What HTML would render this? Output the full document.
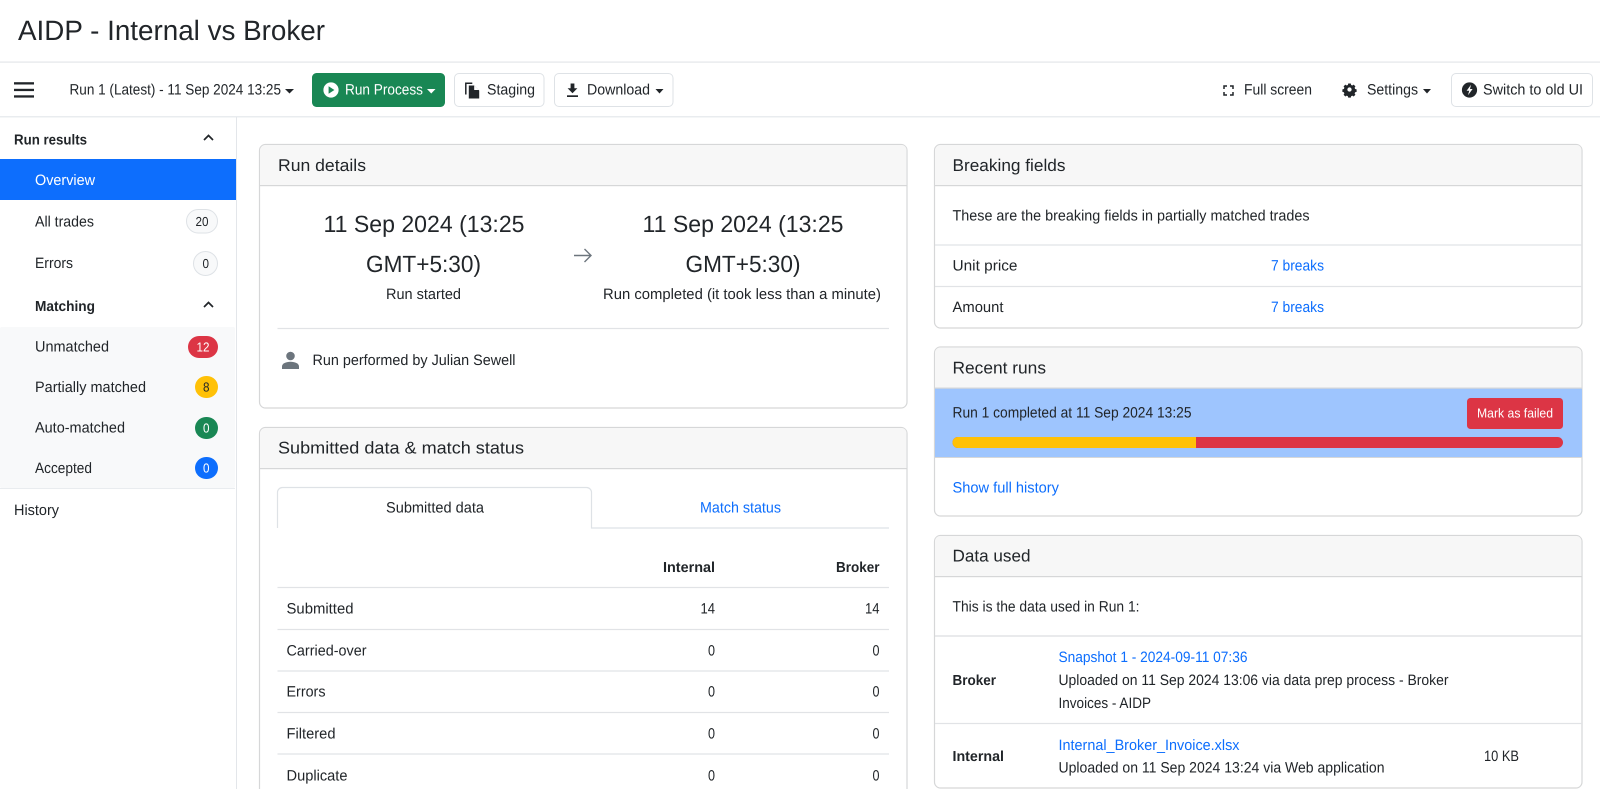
<!DOCTYPE html>
<html lang="en"><head><meta charset="utf-8"><title>AIDP - Internal vs Broker</title>
<style>
html,body{margin:0;padding:0;background:#fff;width:1600px;height:789px;overflow:hidden}
svg{display:block}
text{font-family:"Liberation Sans",sans-serif;font-size:15px;fill:#212529;text-rendering:geometricPrecision;white-space:pre}
.b{font-weight:700;font-size:14.5px}.l{fill:#0d6efd}.w{fill:#fff}.h{font-size:17px}.d{font-size:23.5px}.s{font-size:13px}
.card{fill:#fff;stroke:#d6d7d8;stroke-width:1.2}.hd{fill:#f7f7f7}
.ln{stroke:#e1e3e6;stroke-width:1.2}
</style></head><body>
<svg width="1600" height="789" viewBox="0 0 1600 789" xmlns="http://www.w3.org/2000/svg">
<rect width="1600" height="789" fill="#fff"/>
<text x="18" y="40" style="font-size:28px" textLength="307" lengthAdjust="spacingAndGlyphs">AIDP - Internal vs Broker</text>
<rect y="61.5" width="1600" height="1.2" fill="#e3e6ea"/>
<rect y="116" width="1600" height="1.5" fill="#e9ecef"/>
<rect x="236" y="117" width="1" height="672" fill="#e3e6ea"/>

<!-- toolbar -->
<g fill="#212529"><rect x="14" y="82.2" width="20" height="2.3"/><rect x="14" y="88.8" width="20" height="2.3"/><rect x="14" y="95.3" width="20" height="2.3"/></g>
<text x="69.5" y="94.5" textLength="211.5" lengthAdjust="spacingAndGlyphs">Run 1 (Latest) - 11 Sep 2024 13:25</text>
<path d="M285 89h9l-4.5 4.5z" fill="#212529"/>
<rect x="312" y="73" width="133" height="34" rx="4.5" fill="#198754"/>
<circle cx="331" cy="90" r="7.6" fill="#fff"/><path d="M328.6 86.3v7.4l5.8-3.7z" fill="#198754"/>
<text class="w" x="345" y="94.5" textLength="78" lengthAdjust="spacingAndGlyphs">Run Process</text>
<path d="M427 89h8.5l-4.25 4.5z" fill="#fff"/>
<rect x="454.5" y="73.5" width="89.5" height="33" rx="4.5" fill="#fff" stroke="#dee2e6"/>
<path d="M465.8 94.5V83.2h6.5" fill="none" stroke="#212529" stroke-width="1.5"/>
<path d="M468.8 85.5h5.4l5 5v8h-10.4z" fill="#212529"/><path d="M474.2 85.5v4.5h4.6z" fill="#fff"/>
<text x="487" y="94.5" textLength="48" lengthAdjust="spacingAndGlyphs">Staging</text>
<rect x="554.5" y="73.5" width="118.5" height="33" rx="4.5" fill="#fff" stroke="#dee2e6"/>
<path d="M570.6 83.5h3.8v4.8h3l-4.9 5-4.9-5h3z" fill="#212529"/><rect x="567" y="95.3" width="11" height="1.7" fill="#212529"/>
<text x="587" y="94.5" textLength="63" lengthAdjust="spacingAndGlyphs">Download</text>
<path d="M655.5 89h8l-4 4.5z" fill="#212529"/>
<path d="M1224 89v-3h3M1230 86h3v3M1233 92v3h-3M1227 95h-3v-3" fill="none" stroke="#212529" stroke-width="1.5"/>
<text x="1244" y="94.5" textLength="68" lengthAdjust="spacingAndGlyphs">Full screen</text>
<g transform="translate(1349.5 90.5) scale(.74) translate(-1349.5 -92)"><path fill-rule="evenodd" fill="#212529" d="M1347.8 82.500h3.400l.5 2 1.600.7 1.800-1.100 2.400 2.400-1.100 1.800.7 1.600 2 .5v3.400l-2 .5-.7 1.600 1.100 1.800-2.400 2.400-1.800-1.100-1.600.7-.5 2h-3.400l-.5-2-1.600-.7-1.800 1.100-2.400-2.400 1.100-1.800-.7-1.600-2-.5v-3.400l2-.5.7-1.600-1.100-1.800 2.400-2.400 1.800 1.100 1.600-.7zM1349.500 87.800a2.900 2.900 0 1 0 0 5.800 2.900 2.900 0 0 0 0-5.800z"/></g>
<text x="1367" y="94.5" textLength="51" lengthAdjust="spacingAndGlyphs">Settings</text>
<path d="M1423 89h8l-4 4.500z" fill="#212529"/>
<rect x="1451.500" y="73.500" width="141" height="33" rx="4.500" fill="#fff" stroke="#dee2e6"/>
<circle cx="1469.500" cy="90" r="7.600" fill="#212529"/><path d="M1471 84.800l-4.400 6h2.600l-1.200 4.400 4.600-6.200h-2.600z" fill="#fff"/>
<text x="1483" y="94.500" textLength="100" lengthAdjust="spacingAndGlyphs">Switch to old UI</text>

<!-- sidebar -->
<text class="b" x="14" y="144.500" textLength="73" lengthAdjust="spacingAndGlyphs">Run results</text>
<path d="M204 140l4.500-4.500 4.500 4.500" fill="none" stroke="#212529" stroke-width="1.700"/>
<rect y="159" width="236" height="41" fill="#0d6efd"/>
<text class="w" x="35" y="185" textLength="60" lengthAdjust="spacingAndGlyphs">Overview</text>
<text x="35" y="226.500" textLength="59" lengthAdjust="spacingAndGlyphs">All trades</text>
<rect x="186.500" y="209.500" width="31" height="23.500" rx="11.700" fill="#f8f9fa" stroke="#dee2e6"/>
<text class="s" x="195.500" y="226" textLength="13" lengthAdjust="spacingAndGlyphs">20</text>
<text x="35" y="268" textLength="38" lengthAdjust="spacingAndGlyphs">Errors</text>
<rect x="193.500" y="251.500" width="24" height="24" rx="12" fill="#f8f9fa" stroke="#dee2e6"/>
<text class="s" x="202.500" y="268" textLength="6.500" lengthAdjust="spacingAndGlyphs">0</text>
<text class="b" x="35" y="311" textLength="60" lengthAdjust="spacingAndGlyphs">Matching</text>
<path d="M204 307l4.500-4.500 4.500 4.500" fill="none" stroke="#212529" stroke-width="1.700"/>
<rect y="327" width="235" height="161" rx="2" fill="#f8f9fa"/>
<rect y="488" width="235" height="1" fill="#e9ecef"/>
<text x="35" y="351.500" textLength="74" lengthAdjust="spacingAndGlyphs">Unmatched</text>
<rect x="188" y="336" width="30" height="22" rx="11" fill="#dc3545"/>
<text class="s w" x="196.500" y="351.500" textLength="13" lengthAdjust="spacingAndGlyphs">12</text>
<text x="35" y="392" textLength="111" lengthAdjust="spacingAndGlyphs">Partially matched</text>
<rect x="195" y="376" width="23" height="22" rx="11" fill="#ffc107"/>
<text class="s" x="203" y="391.500" textLength="6.500" lengthAdjust="spacingAndGlyphs">8</text>
<text x="35" y="432.500" textLength="90" lengthAdjust="spacingAndGlyphs">Auto-matched</text>
<rect x="195" y="417" width="23" height="22" rx="11" fill="#198754"/>
<text class="s w" x="203" y="432.500" textLength="6.500" lengthAdjust="spacingAndGlyphs">0</text>
<text x="35" y="473" textLength="57" lengthAdjust="spacingAndGlyphs">Accepted</text>
<rect x="195" y="457" width="23" height="22" rx="11" fill="#0d6efd"/>
<text class="s w" x="203" y="472.500" textLength="6.500" lengthAdjust="spacingAndGlyphs">0</text>
<text x="14" y="515" textLength="45" lengthAdjust="spacingAndGlyphs">History</text>

<!-- Run details -->
<rect class="card" x="259.500" y="144.500" width="647.500" height="263.500" rx="6"/>
<path class="hd" d="M260 185.500v-35a5.500 5.500 0 0 1 5.500-5.500h636a5 5 0 0 1 5 5.500v35z"/>
<rect x="259.500" y="185" width="648" height="1.200" fill="#d6d7d8"/>
<text class="h" x="278" y="171" textLength="88" lengthAdjust="spacingAndGlyphs">Run details</text>
<text class="d" x="323.500" y="232" textLength="201" lengthAdjust="spacingAndGlyphs">11 Sep 2024 (13:25</text>
<text class="d" x="366" y="272" textLength="115" lengthAdjust="spacingAndGlyphs">GMT+5:30)</text>
<text x="386" y="299" textLength="75" lengthAdjust="spacingAndGlyphs">Run started</text>
<path d="M574 255.500h17M584.500 249l6.500 6.500-6.500 6.500" fill="none" stroke="#6c757d" stroke-width="1.400"/>
<text class="d" x="642.500" y="232" textLength="201" lengthAdjust="spacingAndGlyphs">11 Sep 2024 (13:25</text>
<text class="d" x="685.500" y="272" textLength="115" lengthAdjust="spacingAndGlyphs">GMT+5:30)</text>
<text x="603" y="299" textLength="278" lengthAdjust="spacingAndGlyphs">Run completed (it took less than a minute)</text>
<line class="ln" x1="277.500" y1="328.500" x2="889" y2="328.500"/>
<circle cx="290.500" cy="356" r="4.300" fill="#6c757d"/><path d="M282 369v-2.500c0-3 4-4.700 8.500-4.700s8.500 1.700 8.500 4.700v2.500z" fill="#6c757d"/>
<text x="312.500" y="365" textLength="203" lengthAdjust="spacingAndGlyphs">Run performed by Julian Sewell</text>

<!-- Submitted data -->
<rect class="card" x="259.500" y="427.500" width="647.500" height="380" rx="6"/>
<path class="hd" d="M260 468v-34.500a5.500 5.500 0 0 1 5.500-5.500h636a5 5 0 0 1 5 5.500V468z"/>
<rect x="259.500" y="468" width="648" height="1.200" fill="#d6d7d8"/>
<text class="h" x="278" y="453.500" textLength="246" lengthAdjust="spacingAndGlyphs">Submitted data &amp; match status</text>
<path d="M277.500 528v-35.500a5 5 0 0 1 5-5h304a5 5 0 0 1 5 5v35.500H889" fill="none" stroke="#dee2e6" stroke-width="1.200"/>
<text x="386" y="512.500" textLength="98" lengthAdjust="spacingAndGlyphs">Submitted data</text>
<text class="l" x="700" y="512.500" textLength="81" lengthAdjust="spacingAndGlyphs">Match status</text>
<text class="b" x="663" y="572" textLength="52" lengthAdjust="spacingAndGlyphs">Internal</text>
<text class="b" x="836" y="572" textLength="43.500" lengthAdjust="spacingAndGlyphs">Broker</text>
<line class="ln" x1="277.500" y1="587.500" x2="889" y2="587.500"/>
<line class="ln" x1="277.500" y1="629.500" x2="889" y2="629.500"/>
<line class="ln" x1="277.500" y1="671" x2="889" y2="671"/>
<line class="ln" x1="277.500" y1="712.500" x2="889" y2="712.500"/>
<line class="ln" x1="277.500" y1="754" x2="889" y2="754"/>
<text x="286.500" y="613.500" textLength="67" lengthAdjust="spacingAndGlyphs">Submitted</text>
<text x="700.500" y="613.500" textLength="14.500" lengthAdjust="spacingAndGlyphs">14</text>
<text x="865" y="613.500" textLength="14.500" lengthAdjust="spacingAndGlyphs">14</text>
<text x="286.500" y="655.500" textLength="80" lengthAdjust="spacingAndGlyphs">Carried-over</text>
<text x="708" y="655.500" textLength="7" lengthAdjust="spacingAndGlyphs">0</text>
<text x="872.500" y="655.500" textLength="7" lengthAdjust="spacingAndGlyphs">0</text>
<text x="286.500" y="696.500" textLength="39" lengthAdjust="spacingAndGlyphs">Errors</text>
<text x="708" y="696.500" textLength="7" lengthAdjust="spacingAndGlyphs">0</text>
<text x="872.500" y="696.500" textLength="7" lengthAdjust="spacingAndGlyphs">0</text>
<text x="286.500" y="738.500" textLength="49" lengthAdjust="spacingAndGlyphs">Filtered</text>
<text x="708" y="738.500" textLength="7" lengthAdjust="spacingAndGlyphs">0</text>
<text x="872.500" y="738.500" textLength="7" lengthAdjust="spacingAndGlyphs">0</text>
<text x="286.500" y="780.500" textLength="61" lengthAdjust="spacingAndGlyphs">Duplicate</text>
<text x="708" y="780.500" textLength="7" lengthAdjust="spacingAndGlyphs">0</text>
<text x="872.500" y="780.500" textLength="7" lengthAdjust="spacingAndGlyphs">0</text>

<!-- Breaking fields -->
<rect class="card" x="934.500" y="144.500" width="647.500" height="183.500" rx="6"/>
<path class="hd" d="M935 185.500v-35a5.500 5.500 0 0 1 5.500-5.500h636a5 5 0 0 1 5 5.500v35z"/>
<rect x="934.500" y="185" width="648" height="1.200" fill="#d6d7d8"/>
<text class="h" x="952.500" y="171" textLength="113" lengthAdjust="spacingAndGlyphs">Breaking fields</text>
<text x="952.500" y="220.500" textLength="357" lengthAdjust="spacingAndGlyphs">These are the breaking fields in partially matched trades</text>
<line class="ln" x1="935" y1="245" x2="1582" y2="245"/>
<text x="952.500" y="270.500" textLength="65" lengthAdjust="spacingAndGlyphs">Unit price</text>
<text class="l" x="1271" y="270.500" textLength="53" lengthAdjust="spacingAndGlyphs">7 breaks</text>
<line class="ln" x1="935" y1="286.500" x2="1582" y2="286.500"/>
<text x="952.500" y="312" textLength="51" lengthAdjust="spacingAndGlyphs">Amount</text>
<text class="l" x="1271" y="312" textLength="53" lengthAdjust="spacingAndGlyphs">7 breaks</text>

<!-- Recent runs -->
<rect class="card" x="934.500" y="347" width="647.500" height="169" rx="6"/>
<path class="hd" d="M935 388v-35.500a5 5 0 0 1 5-5h636.500a5 5 0 0 1 5 5V388z"/>
<rect x="935" y="388" width="647" height="69" fill="#9ec5fe"/>
<rect x="934.500" y="387.500" width="648" height="1.200" fill="#d6d7d8"/>
<rect x="934.500" y="457" width="648" height="1" fill="#d6d7d8"/>
<text class="h" x="952.500" y="373.500" textLength="93.500" lengthAdjust="spacingAndGlyphs">Recent runs</text>
<text x="952.500" y="417.500" textLength="239" lengthAdjust="spacingAndGlyphs">Run 1 completed at 11 Sep 2024 13:25</text>
<rect x="1467" y="398" width="96" height="31" rx="3.500" fill="#dc3545"/>
<text class="s w" x="1477" y="417.500" textLength="76" lengthAdjust="spacingAndGlyphs">Mark as failed</text>
<rect x="952.500" y="437" width="610.500" height="11" rx="5.500" fill="#dc3545"/>
<path d="M958 437h238v11H958a5.500 5.500 0 0 1 0-11z" fill="#ffc107"/>
<text class="l" x="952.500" y="492.500" textLength="106.500" lengthAdjust="spacingAndGlyphs">Show full history</text>

<!-- Data used -->
<rect class="card" x="934.500" y="535.500" width="647.500" height="252.500" rx="6"/>
<path class="hd" d="M935 576v-35a5 5 0 0 1 5-5h636.500a5 5 0 0 1 5 5v35z"/>
<rect x="934.500" y="576" width="648" height="1.200" fill="#d6d7d8"/>
<text class="h" x="952.500" y="561.500" textLength="78" lengthAdjust="spacingAndGlyphs">Data used</text>
<text x="952.500" y="611.500" textLength="187" lengthAdjust="spacingAndGlyphs">This is the data used in Run 1:</text>
<line x1="935" y1="636" x2="1582" y2="636" stroke="#dcdee0" stroke-width="1.200"/>
<text class="b" x="952.500" y="685" textLength="43.500" lengthAdjust="spacingAndGlyphs">Broker</text>
<text class="l" x="1058.500" y="662" textLength="189" lengthAdjust="spacingAndGlyphs">Snapshot 1 - 2024-09-11 07:36</text>
<text x="1058.500" y="685" textLength="390" lengthAdjust="spacingAndGlyphs">Uploaded on 11 Sep 2024 13:06 via data prep process - Broker</text>
<text x="1058.500" y="708" textLength="92.500" lengthAdjust="spacingAndGlyphs">Invoices - AIDP</text>
<line class="ln" x1="935" y1="723.500" x2="1582" y2="723.500"/>
<text class="b" x="952.500" y="761" textLength="51.500" lengthAdjust="spacingAndGlyphs">Internal</text>
<text class="l" x="1058.500" y="750" textLength="181" lengthAdjust="spacingAndGlyphs">Internal_Broker_Invoice.xlsx</text>
<text x="1058.500" y="772.500" textLength="326" lengthAdjust="spacingAndGlyphs">Uploaded on 11 Sep 2024 13:24 via Web application</text>
<text x="1484" y="761" textLength="35" lengthAdjust="spacingAndGlyphs">10 KB</text>
</svg>
</body></html>
